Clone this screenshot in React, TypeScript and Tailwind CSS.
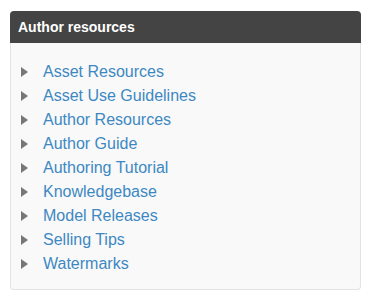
import React from 'react';

const links = [
  'Asset Resources',
  'Asset Use Guidelines',
  'Author Resources',
  'Author Guide',
  'Authoring Tutorial',
  'Knowledgebase',
  'Model Releases',
  'Selling Tips',
  'Watermarks',
];

export default function App() {
  return (
    <div className="w-[371px] h-[301px] bg-white pt-[11px] pl-[10px]" style={{ fontFamily: '"Liberation Sans", Arial, sans-serif' }}>
      <div className="w-[351px] rounded-[4px]">
        <div className="h-[32px] bg-[#444444] rounded-t-[4px] flex items-center px-[8px] text-white text-[14px] font-bold">
          Author resources
        </div>
        <ul className="bg-[#f9f9f9] border border-t-0 border-[#e3e3e3] rounded-b-[4px] pt-[17px] pb-[13px] pl-[10px]">
          {links.map(l => (
            <li key={l} className="flex items-center h-[24px]">
              <svg width="7" height="10" viewBox="0 0 7 10" className="mr-[15px]">
                <polygon points="0,0 7,5 0,10" fill="#777777" />
              </svg>
              <a className="text-[16px] text-[#3d88c2]">{l}</a>
            </li>
          ))}
        </ul>
      </div>
    </div>
  );
}
